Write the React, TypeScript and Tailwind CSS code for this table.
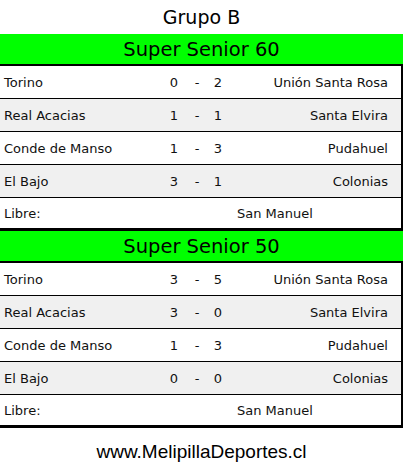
type Match = { home: string; a: number; b: number; away: string }

interface Group {
  title: string
  matches: Match[]
  libre: string
}

const groups: Group[] = [
  {
    title: 'Super Senior 60',
    matches: [
      { home: 'Torino', a: 0, b: 2, away: 'Unión Santa Rosa' },
      { home: 'Real Acacias', a: 1, b: 1, away: 'Santa Elvira' },
      { home: 'Conde de Manso', a: 1, b: 3, away: 'Pudahuel' },
      { home: 'El Bajo', a: 3, b: 1, away: 'Colonias' },
    ],
    libre: 'San Manuel',
  },
  {
    title: 'Super Senior 50',
    matches: [
      { home: 'Torino', a: 3, b: 5, away: 'Unión Santa Rosa' },
      { home: 'Real Acacias', a: 3, b: 0, away: 'Santa Elvira' },
      { home: 'Conde de Manso', a: 1, b: 3, away: 'Pudahuel' },
      { home: 'El Bajo', a: 0, b: 0, away: 'Colonias' },
    ],
    libre: 'San Manuel',
  },
]

function Section({ group }: { group: Group }) {
  return (
    <div>
      <div className="h-[32px] pt-[2px] bg-[#00ff00] border-b-2 border-black flex items-center justify-center text-[19.5px] leading-none text-black">
        {group.title}
      </div>
      <div className="border-r-2 border-black">
        {group.matches.map((m, i) => (
          <div
            key={i}
            className={`h-[33px] pt-[2px] flex items-center border-b border-black text-[13px] text-[#111] ${
              i % 2 === 1 ? 'bg-[#f0f0f0]' : 'bg-white'
            }`}
          >
            <div className="w-[160px] pl-[4px]">{m.home}</div>
            <div className="w-[28px] text-center">{m.a}</div>
            <div className="w-[18px] text-center">-</div>
            <div className="w-[24px] text-center">{m.b}</div>
            <div className="flex-1 text-right pr-[13px]">{m.away}</div>
          </div>
        ))}
        <div className="h-[33px] pt-[1px] flex items-center border-b-[3px] border-black bg-white text-[13px] text-[#111]">
          <div className="w-[237px] pl-[4px]">Libre:</div>
          <div>{group.libre}</div>
        </div>
      </div>
    </div>
  )
}

export default function App() {
  return (
    <div className="w-[403px] h-[476px] bg-white font-['DejaVu_Sans',Verdana,sans-serif]">
      <div className="h-[34px] flex items-center justify-center text-[19px] text-black">Grupo B</div>
      {groups.map((g) => (
        <Section key={g.title} group={g} />
      ))}
      <div className="h-[48px] flex items-center justify-center font-['Liberation_Sans',Arial,sans-serif] text-[19px] text-black">
        www.MelipillaDeportes.cl
      </div>
    </div>
  )
}
